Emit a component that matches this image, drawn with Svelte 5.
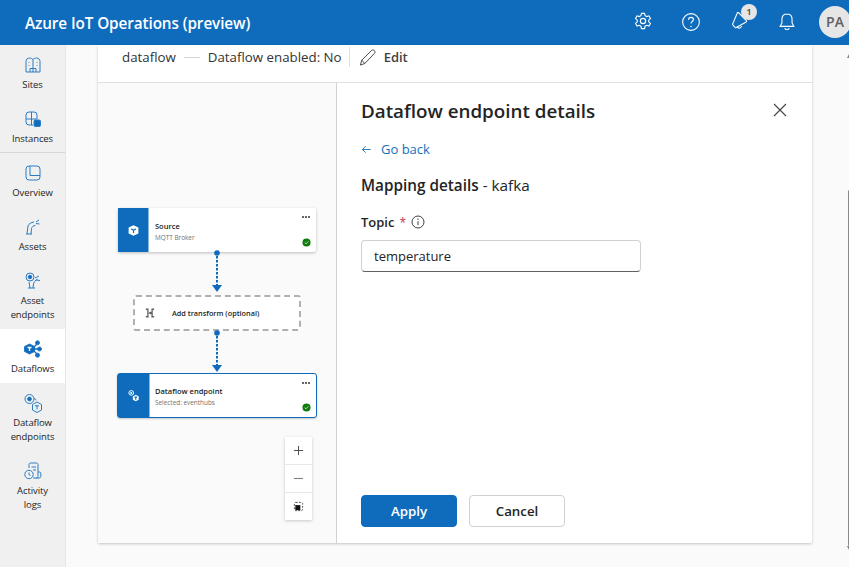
<script>
  const navItems = [
    { id: 'sites', label: ['Sites'] },
    { id: 'instances', label: ['Instances'], divider: true },
    { id: 'overview', label: ['Overview'] },
    { id: 'assets', label: ['Assets'] },
    { id: 'assetEndpoints', label: ['Asset', 'endpoints'] },
    { id: 'dataflows', label: ['Dataflows'], active: true },
    { id: 'dataflowEndpoints', label: ['Dataflow', 'endpoints'] },
    { id: 'logs', label: ['Activity', 'logs'] }
  ];
</script>

<div class="page">
  <header class="topbar">
    <div class="brand">Azure IoT Operations (preview)</div>
    <div class="actions">
      <svg class="top-icon" viewBox="0 0 20 20"><path d="M8.600 2.200h2.800l.5 2.100 1.500.8 2-.7 1.400 2.400-1.600 1.500v1.500l1.600 1.500-1.400 2.400-2-.7-1.500.8-.5 2.200H8.600l-.5-2.200-1.500-.8-2 .7-1.400-2.400 1.600-1.500V8.300L3.200 6.800l1.400-2.400 2 .7 1.500-.8z"/><circle cx="10" cy="9.100" r="2.400"/></svg>
      <svg class="top-icon" viewBox="0 0 20 20"><circle cx="10" cy="10" r="7.600"/><path d="M7.800 8c0-1.300 1-2.200 2.200-2.200s2.200.9 2.200 2c0 1.700-2.200 1.800-2.200 3.600"/><circle class="dot" cx="10" cy="14" r=".7"/></svg>
      <div class="feedback">
        <svg class="top-icon" viewBox="0 0 20 20"><path d="M8.500 2.500c.3-.4.800-.4 1.200 0l7 7.200c.4.400.3 1-.2 1.200L7.500 16c-.4.200-.8.100-1.100-.2l-2-2.200c-.3-.3-.3-.7-.1-1z"/><path d="M8.500 15.200c.5 1.800 3 2 3.800-.6"/></svg>
        <span class="badge">1</span>
      </div>
      <svg class="top-icon" viewBox="0 0 20 20"><path d="M10 2.600c-3 0-4.600 2.300-4.600 4.800v3.400L3.800 14h12.400l-1.600-3.200V7.400c0-2.500-1.600-4.800-4.600-4.800z"/><path d="M8 15.500c.3 1.800 3.700 1.800 4 0"/></svg>
      <div class="avatar">PA</div>
    </div>
  </header>

  <div class="body">
    <nav class="sidebar">
      {#each navItems as item}
        <div class="nav-item" class:active={item.active} class:divided={item.divider}>
          <svg class="nav-icon" viewBox="0 0 20 20">
            {#if item.id === 'sites'}
              <path d="M3 6.500c0-2 1.500-3.500 3.500-3.500 1.500 0 2.500.7 3.500 1.500C11 3.700 12 3 13.500 3 15.500 3 17 4.500 17 6.500V17H3z"/><path d="M10 4.500V17M7 17v-3.500h6V17M6 7v.8M6 10v.8M14 7v.8M14 10v.8"/>
            {:else if item.id === 'instances'}
              <path d="M10 16H6a3 3 0 0 1-3-3V6a3 3 0 0 1 3-3h5a3 3 0 0 1 3 3v4H3M8.500 3v13"/><rect class="solid" x="11" y="11" width="6.500" height="6.500" rx="1.200"/>
            {:else if item.id === 'overview'}
              <rect x="3" y="3" width="14" height="14" rx="3"/><path d="M7 3v9.500M7 12.500h10"/>
            {:else if item.id === 'assets'}
              <path d="M4 17l1-8c.5-2 3-3.500 6-4M8 17l.5-5.500c.4-1.600 2-3 4-3.200M3 17h6M13 5l3-2M13 6.500l3.500.5"/>
            {:else if item.id === 'assetEndpoints'}
              <circle cx="7" cy="6" r="4"/><circle class="solid" cx="7" cy="6" r="1.800"/><path d="M6 11l1 6M10 17l.5-4c.5-2 2-4 4-5M5 17h7M12 7l4-2M13 9l4 .5"/>
            {:else if item.id === 'dataflows'}
              <path class="solid" d="M1.500 7.500 6.500 5l5 2.500v5l-5 2.500-5-2.500z"/><circle class="solid" cx="14.500" cy="3.800" r="2"/><circle class="solid" cx="16.500" cy="10" r="2"/><circle class="solid" cx="14.500" cy="16.200" r="2"/><path class="thick" d="M11 8l3-3M11 10h4M11 12l3 3"/><path class="cut" d="M4.500 8.500h4M6.500 8.500v3.500"/>
            {:else if item.id === 'dataflowEndpoints'}
              <circle cx="6.500" cy="6" r="4.500"/><circle class="solid" cx="6.500" cy="6" r="1.900"/><path d="M11 5.500c1 .2 1.800.8 2.300 1.800"/><path d="M9.500 11.500l4.500-2.500 4.500 2.500V17l-4.500 2.500L9.500 17z"/><path d="M12 12.800h4M14 12.800v3.600"/>
            {:else}
              <path d="M6 7V3.500C6 2.700 6.700 2 7.500 2h6c.8 0 1.500.7 1.500 1.500v12c0 .8-.7 1.500-1.500 1.500H10M8.500 6h4.500M10 9h3M15 11h1.500c.8 0 1.300.6 1.300 1.300v3c0 .9-.7 1.700-1.700 1.700H13"/><circle cx="6" cy="13.500" r="4.200"/><path d="M6 11.500v2.200l1.500.8"/>
            {/if}
          </svg>
          <div class="nav-label">
            {#each item.label as line}<span>{line}</span>{/each}
          </div>
        </div>
      {/each}
    </nav>

    <main class="main">
      <section class="card">
        <div class="card-head">
          <span class="name">dataflow</span>
          <span class="dash"></span>
          <span class="enabled">Dataflow enabled: No</span>
          <span class="sep"></span>
          <svg class="edit-icon" viewBox="0 0 20 20"><path d="M2.500 18 4 12.800 14 2.800c1-1 2.500-1 3.300 0 .8.900.7 2.200-.2 3.100L7.200 16.300zM4 12.800l3.200 3.500"/></svg>
          <span class="edit">Edit</span>
        </div>
        <div class="card-body">
          <div class="canvas">
            <div class="node node-source">
              <div class="node-side">
                <svg viewBox="0 0 20 20"><path class="side-solid" d="M10 2 17.500 5.500v9L10 18l-7.500-3.500v-9z"/><path class="side-cut" d="M6.500 7.500 10 9.500l3.500-2M10 9.500v4.500"/></svg>
              </div>
              <div class="node-text"><div class="node-title">Source</div><div class="node-sub">MQTT Broker</div></div>
              <div class="more"><i></i><i></i><i></i></div>
              <svg class="ok" viewBox="0 0 10 10"><circle cx="5" cy="5" r="4.500"/><path d="M3 5.200 4.400 6.500 7 3.700"/></svg>
            </div>

            <svg class="link link-a" viewBox="0 0 12 44"><circle cx="6" cy="3" r="2.800"/><path class="dots" d="M6 6V36"/><path d="M1 35h10L6 42z"/></svg>

            <div class="transform">
              <svg viewBox="0 0 12 12"><path d="M1 1.500h2.500v9H1M11 1.500H8.500v9H11M4.700 6h2.600M6.300 4.800 7.500 6 6.300 7.200"/></svg>
              <span>Add transform (optional)</span>
            </div>

            <svg class="link link-b" viewBox="0 0 12 44"><circle cx="6" cy="3" r="2.800"/><path class="dots" d="M6 6V36"/><path d="M1 35h10L6 42z"/></svg>

            <div class="node node-endpoint">
              <div class="node-side">
                <svg viewBox="0 0 20 20"><circle class="side-line" cx="6.500" cy="6" r="3.600"/><circle class="side-solid" cx="6.500" cy="6" r="1.500"/><path class="side-solid" d="M13.500 9 18 11.500v5L13.500 19 9 16.500v-5z"/><path class="side-cut" d="M11.500 12.500h4M13.500 12.500v4"/></svg>
              </div>
              <div class="node-text"><div class="node-title">Dataflow endpoint</div><div class="node-sub">Selected: eventhubs</div></div>
              <div class="more"><i></i><i></i><i></i></div>
              <svg class="ok" viewBox="0 0 10 10"><circle cx="5" cy="5" r="4.500"/><path d="M3 5.200 4.400 6.500 7 3.700"/></svg>
            </div>

            <div class="zoom">
              <div class="zoom-btn"><svg viewBox="0 0 12 12"><path d="M6 1v10M1 6h10"/></svg></div>
              <div class="zoom-btn"><svg viewBox="0 0 12 12"><path class="minus" d="M1 6h10"/></svg></div>
              <div class="zoom-btn"><svg viewBox="0 0 12 12"><rect class="fit-line" x="1.500" y="1.500" width="9" height="9" rx="1.500"/><rect class="fit-solid" x="2.500" y="4.500" width="5.500" height="5.500"/></svg></div>
            </div>
          </div>

          <aside class="panel">
            <div class="panel-top">
              <h1>Dataflow endpoint details</h1>
              <svg class="close" viewBox="0 0 14 14"><path d="M1 1l12 12M13 1 1 13"/></svg>
            </div>
            <div class="back"><svg viewBox="0 0 12 12"><path d="M10.500 6h-9M5 2.500 1.500 6 5 9.500"/></svg><span>Go back</span></div>
            <div class="mapping"><strong>Mapping details</strong> - kafka</div>
            <div class="field-label">
              <span class="topic">Topic</span><span class="req">*</span>
              <svg viewBox="0 0 14 14"><circle cx="7" cy="7" r="6"/><path d="M7 6.200v4"/><circle class="i-dot" cx="7" cy="4.200" r=".7"/></svg>
            </div>
            <div class="input">temperature</div>
            <div class="buttons">
              <button class="primary">Apply</button>
              <button class="secondary">Cancel</button>
            </div>
          </aside>
        </div>
      </section>
      <div class="scroll">
        <span class="arrow up"></span>
        <span class="thumb"></span>
        <span class="arrow down"></span>
      </div>
    </main>
  </div>
</div>

<style>
  :global(body) { margin: 0; }
  .page {
    width: 849px; height: 567px; overflow: hidden; display: flex; flex-direction: column;
    font-family: "Open Sans", "Noto Sans", sans-serif; color: #242424; background: #fafafa;
  }
  .topbar {
    flex: 0 0 45px; background: #0f6cbd; display: flex; align-items: center; justify-content: space-between;
    padding-left: 25px; color: #fff;
  }
  .brand { font-size: 15.300px; font-weight: 600; letter-spacing: -.1px; }
  .actions { display: flex; align-items: center; }
  .top-icon { width: 22px; height: 22px; fill: none; stroke: #fff; stroke-width: 1; display: block; margin-top: -2px; }
  .top-icon .dot { fill: #fff; stroke: none; }
  .actions > .top-icon:nth-child(1), .actions > .top-icon:nth-child(2) { margin-right: 26px; }
  .feedback { position: relative; margin-right: 26px; width: 22px; height: 22px; }
  .badge {
    position: absolute; left: 13px; top: -8px; width: 16px; height: 16px; border-radius: 50%;
    background: #e6e6e6; color: #444; font-size: 9.500px; font-weight: 600; display: flex; align-items: center; justify-content: center;
  }
  .avatar {
    width: 32px; height: 32px; border-radius: 50%; background: #e6e6e6; color: #616161; margin-left: 21px; margin-right: -2px;
    font-size: 14px; font-weight: 600; display: flex; align-items: center; justify-content: center; margin-top: -2px;
  }
  .body { flex: 1; display: flex; min-height: 0; }
  .sidebar { flex: 0 0 65px; background: #f0f0f0; border-right: 1px solid #e6e6e6; }
  .nav-item { display: flex; flex-direction: column; align-items: center; padding: 10px 0 7px; box-sizing: border-box; }
  .nav-item.active { background: #fff; }
  .nav-item.divided { border-bottom: 1px solid #d6d6d6; padding-bottom: 6px; }
  .nav-icon { width: 20px; height: 20px; fill: none; stroke: #2a7cc4; stroke-width: 1; display: block; }
  .nav-icon .solid { fill: #0f6cbd; }
  .nav-icon .thick { stroke: #0f6cbd; stroke-width: 1.300; }
  .nav-icon .cut { stroke: #fff; stroke-width: 1.300; }
  .nav-label { margin-top: 3px; font-size: 9.500px; line-height: 14px; text-align: center; letter-spacing: -.1px; color: #242424; }
  .nav-label span { display: block; }

  .main { flex: 1; position: relative; padding-left: 32px; min-width: 0; }
  .card { width: 714px; height: 498px; background: #fff; box-shadow: 0 1px 3px rgba(0,0,0,.22); border-radius: 0 0 2px 2px; display: flex; flex-direction: column; }
  .card-head { flex: 0 0 38px; box-sizing: border-box; border-bottom: 1px solid #e0e0e0; display: flex; align-items: center; padding: 0 0 13px 24px; font-size: 13.300px; color: #333; }
  .dash { width: 16px; height: 1px; background: #d6d6d6; margin: 0 8px; }
  .sep { width: 1px; height: 20px; background: #e0e0e0; margin: 0 8px 0 7px; }
  .edit-icon { width: 19px; height: 19px; fill: none; stroke: #424242; stroke-width: 1; margin-right: 7px; }
  .edit { font-weight: 600; color: #424242; font-size: 13px; }
  .card-body { flex: 1; display: flex; min-height: 0; }
  .canvas { flex: 0 0 238px; position: relative; background: #fafafa; border-right: 1px solid #d1d1d1; }

  .node { position: absolute; left: 20px; width: 198px; height: 44px; background: #fff; border-radius: 2px; box-shadow: 0 1px 3px rgba(0,0,0,.25); display: flex; box-sizing: border-box; }
  .node-source { top: 125px; }
  .node-endpoint { top: 290px; height: 45px; width: 200px; left: 19px; border: 1px solid #0f6cbd; border-radius: 3px; box-shadow: 0 1px 2px rgba(0,0,0,.2); }
  .node-side { flex: 0 0 31px; background: #0f6cbd; display: flex; align-items: center; justify-content: center; border-right: 1px solid #8ab8de; }
  .node-source .node-side { flex-basis: 30px; }
  .node-side svg { width: 13px; height: 13px; }
  .side-solid { fill: #fff; }
  .side-line { fill: none; stroke: #fff; stroke-width: 1.500; }
  .side-cut { fill: none; stroke: #0f6cbd; stroke-width: 1.800; }
  .node-text { padding: 13px 0 0 6px; }
  .node-endpoint .node-text { padding: 12px 0 0 5px; }
  .node-title { font-size: 7.500px; font-weight: 600; line-height: 11px; color: #242424; }
  .node-sub { font-size: 6.400px; line-height: 9px; margin-top: 1px; color: #707070; }
  .more { position: absolute; right: 6px; top: 8px; display: flex; gap: 1px; }
  .more i { width: 2px; height: 2px; background: #333; border-radius: 50%; display: block; }
  .ok { position: absolute; right: 5px; bottom: 5px; width: 9px; height: 9px; }
  .ok circle { fill: #107c10; }
  .ok path { fill: none; stroke: #fff; stroke-width: .8; }

  .link { position: absolute; left: 113px; width: 12px; height: 44px; fill: #0f6cbd; }
  .link .dots { fill: none; stroke: #0f6cbd; stroke-width: 2; stroke-dasharray: 2.500 1.500; }
  .link-a { top: 167px; }
  .link-b { top: 247px; }

  .transform { position: absolute; left: 35px; top: 212px; width: 168px; height: 36px; box-sizing: border-box; background: #fff; border: 2px dashed #b0b0b0; border-radius: 3px; display: flex; align-items: center; padding-left: 10px; font-size: 7.300px; font-weight: 600; }
  .transform svg { width: 10px; height: 10px; fill: none; stroke: #616161; stroke-width: 1.600; margin-right: 17px; }

  .zoom { position: absolute; left: 187px; top: 354px; width: 27px; background: #fff; box-shadow: 0 1px 3px rgba(0,0,0,.2); }
  .zoom-btn { height: 27px; display: flex; align-items: center; justify-content: center; border-bottom: 1px solid #e8e8e8; }
  .zoom-btn:last-child { border-bottom: 0; }
  .zoom-btn svg { width: 11px; height: 11px; fill: none; stroke: #424242; stroke-width: 1; }
  .zoom-btn .minus { stroke: #808080; stroke-width: 1.200; }
  .fit-line { stroke-dasharray: 2 1.500; }
  .fit-solid { fill: #111; stroke: none; }

  .panel { flex: 1; position: relative; padding: 1px 24px 0; display: flex; flex-direction: column; min-width: 0; }
  .panel-top { height: 55px; display: flex; align-items: center; justify-content: space-between; }
  h1 { margin: 0; font-size: 18.800px; font-weight: 600; line-height: 55px; color: #242424; }
  .close { width: 14px; height: 14px; fill: none; stroke: #424242; stroke-width: 1.100; margin: 0 1px 3px 0; }
  .back { display: flex; align-items: center; height: 20px; font-size: 13px; color: #1170bd; }
  .back svg { width: 11px; height: 11px; fill: none; stroke: #1170bd; stroke-width: 1; margin-right: 9px; }
  .mapping { margin-top: 16px; height: 20px; line-height: 20px; font-size: 15.300px; color: #242424; }
  .mapping strong { font-weight: 600; }
  .field-label { display: flex; align-items: center; height: 20px; margin-top: 17px; font-size: 13px; }
  .topic { font-weight: 600; }
  .req { color: #c4314b; margin-left: 5px; font-size: 12px; }
  .field-label svg { width: 14px; height: 14px; margin-left: 5px; fill: none; stroke: #424242; stroke-width: 1; }
  .field-label .i-dot { fill: #424242; stroke: none; }
  .input { width: 280px; height: 32px; box-sizing: border-box; margin-top: 8px; border: 1px solid #d1d1d1; border-bottom-color: #616161; border-radius: 4px; display: flex; align-items: center; padding-left: 12px; font-size: 13px; color: #242424; }
  .buttons { position: absolute; left: 24px; bottom: 16px; display: flex; gap: 12px; }
  button { width: 96px; height: 32px; border-radius: 4px; font: 600 13.300px "Open Sans", "Noto Sans", sans-serif; padding: 0; box-sizing: border-box; }
  .primary { background: #0f6cbd; color: #fff; border: 1px solid #0f6cbd; }
  .secondary { background: #fff; color: #242424; border: 1px solid #d1d1d1; }

  .scroll { position: absolute; left: 781px; top: 0; bottom: 0; width: 4px; }
  .thumb { position: absolute; left: 1px; top: 145px; height: 356px; width: 3px; background: #8a8a8a; border-radius: 2px; }
  .arrow { position: absolute; left: 0; width: 0; height: 0; border-left: 2.500px solid transparent; border-right: 2.500px solid transparent; }
  .up { top: 9px; border-bottom: 4px solid #808080; }
  .down { top: 501px; border-top: 4px solid #808080; }
</style>
